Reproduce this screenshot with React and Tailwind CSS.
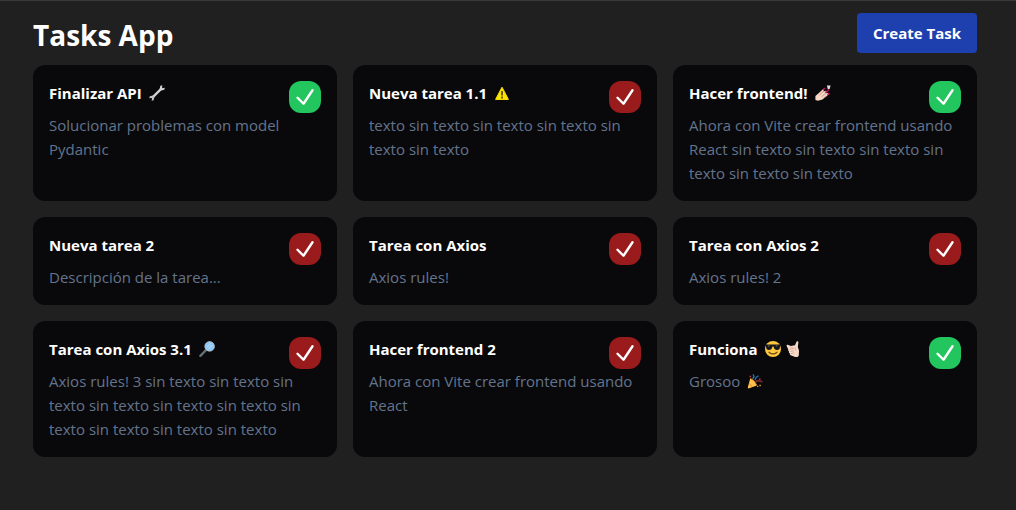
import React from "react";

function Wrench() {
  return (
    <svg viewBox="0 0 16 16" className="h-4 w-4" aria-hidden="true">
      <path d="M3.6 12.4 12.4 3.6" stroke="#d4d4d4" strokeWidth="2.2" />
      <path d="M11.4.8 10.6 4 12 5.4 15.2 4.8 15.9 2.8 13.8 3.2 12.9 2.3 13.4.3Z" fill="#d4d4d4" />
      <path d="M.8 11.2.1 13.2 2.1 12.8 3.1 13.8 2.6 15.8 4.6 15.2 5.4 12 4 10.6Z" fill="#c4c4c4" />
    </svg>
  );
}

function Warning() {
  return (
    <svg viewBox="0 0 16 16" className="h-4 w-4" aria-hidden="true">
      <path d="M8 2.2 14.4 14.4H1.6Z" fill="#fde300" stroke="#fde300" strokeWidth="1" strokeLinejoin="round" />
      <path d="M7 6h2v4.6H7zM7 11.6h2v1.8H7z" fill="#6b5d12" />
    </svg>
  );
}

function NailPolish() {
  return (
    <svg viewBox="0 0 16 16" className="h-4 w-4" aria-hidden="true">
      <path d="M.4 11 4.4 7.4 8.2 4 9.2 5.2 8 6.8 10.6 5.8 11.6 7.2 10.8 8.2 12.8 8 13.4 9.6 11.6 11.2 7.4 14.4 3 15.8.4 15Z" fill="#f7d7c4" />
      <path d="M4.6 10 8 6.8M6.6 11.8 10.8 8.2M8.6 13 11.6 11" stroke="#a87c69" strokeWidth=".7" />
      <path d="M7.4 4.6 9.4 2.6 10 3.6 8.6 5.8ZM9.8 7 11.8 5.4 12.4 6.6 10.8 8.2ZM12 9.2 14.2 7.6 14.6 9 12.8 10.6Z" fill="#e3186b" />
      <path d="M13.4 4 12.6 6.8" stroke="#e3186b" strokeWidth="1.1" />
      <path d="M11.8.4h3.8l-1 3.6h-1.8z" fill="#dedede" />
    </svg>
  );
}

function Magnifier() {
  return (
    <svg viewBox="0 0 16 16" className="h-4 w-4" aria-hidden="true">
      <path d="M1.4 14.8 7 9" stroke="#63717a" strokeWidth="2.4" strokeLinecap="round" />
      <circle cx="10.6" cy="5.4" r="4.7" fill="#8fc8f6" stroke="#b9cbd8" strokeWidth="1" />
      <path d="M8 6.2 11.6 2.4M9.6 8 13.4 4" stroke="#b8dffc" strokeWidth="1" />
    </svg>
  );
}

function Sunglasses() {
  return (
    <svg viewBox="0 0 18 18" className="h-[18px] w-[18px]" aria-hidden="true">
      <circle cx="9" cy="9" r="8" fill="#ffc83d" />
      <path d="M1.2 4.4H16.8V5.8L16 6.2C16 9 15 10 13 10 10.8 10 10 8.6 9.6 6.6H8.4C8 8.6 7.2 10 5 10 3 10 2 9 2 6.2L1.2 5.8Z" fill="#17171b" />
      <path d="M4 6.2 5.6 5.6M11.8 6.2 13.4 5.6" stroke="#77777d" strokeWidth=".9" />
      <path d="M5 12.2Q9 15.6 13 12.2" fill="none" stroke="#6b451d" strokeWidth="1.2" strokeLinecap="round" />
    </svg>
  );
}

function CallMe() {
  return (
    <svg viewBox="0 0 14 18" className="h-[18px] w-[14px]" aria-hidden="true">
      <path d="M10.6 1.6Q12.4.4 12.4 2.4L11.8 7 13 10.6 12.8 15.4 11.6 17H9.2L4.6 15.2Q3.4 14.6 4 13.4 2.4 12.8 3 11.4 1.8 10.6 2.2 9.2L.6 6Q.4 4.4 1.8 4.8L4.8 6 9 5.2Z" fill="#f7d9c8" />
      <path d="M4.4 7.2 7.6 8.6 3.4 9.4M4.4 11.6 7.8 10.8M5 13.6 8.2 12.8M9 7.2 9.8 10.4" fill="none" stroke="#c89f8b" strokeWidth=".7" />
    </svg>
  );
}

function Party() {
  return (
    <svg viewBox="0 0 16 16" className="h-4 w-4" aria-hidden="true">
      <path d="M3.2 5.4Q8 7 9.8 12.6L1.6 15.4Q.6 15.4.8 14.6Z" fill="#ffc24a" />
      <path d="M2.4 10.4 5.4 14" stroke="#f28a1e" strokeWidth="1" />
      <path d="M3.6 5.6Q8 7.2 9.6 12" fill="none" stroke="#d9822b" strokeWidth="1" />
      <path d="M5.6 5.6Q8 3.8 6 1.4" fill="none" stroke="#1f7fae" strokeWidth="1.4" />
      <path d="M8.2 7Q8.4 3.6 11.6 2.8" fill="none" stroke="#2370a0" strokeWidth="1.2" />
      <path d="M8.4 8.6Q11 7.2 15.4 8.8" fill="none" stroke="#7c2531" strokeWidth="1.8" />
      <path d="M2.6 2.8H4V4.2H2.6zM12 5.6h1.6v1.2H12z" fill="#c93a46" />
      <path d="M12.4 11.8h1.4v1.4h-1.4zM10 12.8h1.2V14H10z" fill="#e8a21e" />
    </svg>
  );
}

const tasks = [
  { title: "Finalizar API", icons: [Wrench], text: "Solucionar problemas con model Pydantic", done: true },
  { title: "Nueva tarea 1.1", icons: [Warning], text: "texto sin texto sin texto sin texto sin texto sin texto", done: false },
  {
    title: "Hacer frontend!",
    icons: [NailPolish],
    text: "Ahora con Vite crear frontend usando React sin texto sin texto sin texto sin texto sin texto sin texto",
    done: true,
  },
  { title: "Nueva tarea 2", text: "Descripción de la tarea...", done: false },
  { title: "Tarea con Axios", text: "Axios rules!", done: false },
  { title: "Tarea con Axios 2", text: "Axios rules! 2", done: false },
  {
    title: "Tarea con Axios 3.1",
    icons: [Magnifier],
    text: "Axios rules! 3 sin texto sin texto sin texto sin texto sin texto sin texto sin texto sin texto sin texto sin texto",
    done: false,
  },
  { title: "Hacer frontend 2", text: "Ahora con Vite crear frontend usando React", done: false },
  { title: "Funciona", icons: [Sunglasses, CallMe], text: "Grosoo", textIcon: Party, done: true },
];

function TaskCard({ title, icons = [], text, textIcon: TextIcon, done }) {
  return (
    <article className="rounded-xl bg-zinc-950 p-4">
      <header className="flex items-start justify-between">
        <h2 className="flex items-center gap-[7px] text-[15px] leading-6 font-bold text-white">
          {title}
          {icons.length > 0 && (
            <span className="flex items-center gap-1">
              {icons.map((Icon, i) => (
                <Icon key={i} />
              ))}
            </span>
          )}
        </h2>
        <button
          type="button"
          aria-label={`Completar ${title}`}
          aria-pressed={done}
          className={`rounded-xl p-1 text-white ${done ? "bg-[#22c55e]" : "bg-[#991b1b]"}`}
        >
          <svg viewBox="0 0 24 24" className="h-6 w-6" fill="none" stroke="currentColor" strokeWidth="2.4" strokeLinecap="round" strokeLinejoin="round" aria-hidden="true">
            <path d="m4.5 12.75 6 6 9-13.5" />
          </svg>
        </button>
      </header>
      <p className="flex items-center gap-[7px] text-[15px] leading-6 text-[#64748b]">
        {text}
        {TextIcon && <TextIcon />}
      </p>
    </article>
  );
}

export default function App() {
  return (
    <div className="min-h-screen border-t border-[#3a3a3a] bg-[#202020] pt-3 pr-[39px] pb-12 pl-[33px] font-['Open_Sans','Noto_Sans',sans-serif]">
      <header className="mb-3 flex items-end justify-between">
        <h1 className="text-[28px] leading-9 font-bold text-white">Tasks App</h1>
        <button type="button" className="rounded-sm bg-[#1e40af] px-4 py-2 text-[15px] leading-6 font-bold text-white">
          Create Task
        </button>
      </header>
      <main className="grid grid-cols-3 gap-4">
        {tasks.map((task) => (
          <TaskCard key={task.title} {...task} />
        ))}
      </main>
    </div>
  );
}
